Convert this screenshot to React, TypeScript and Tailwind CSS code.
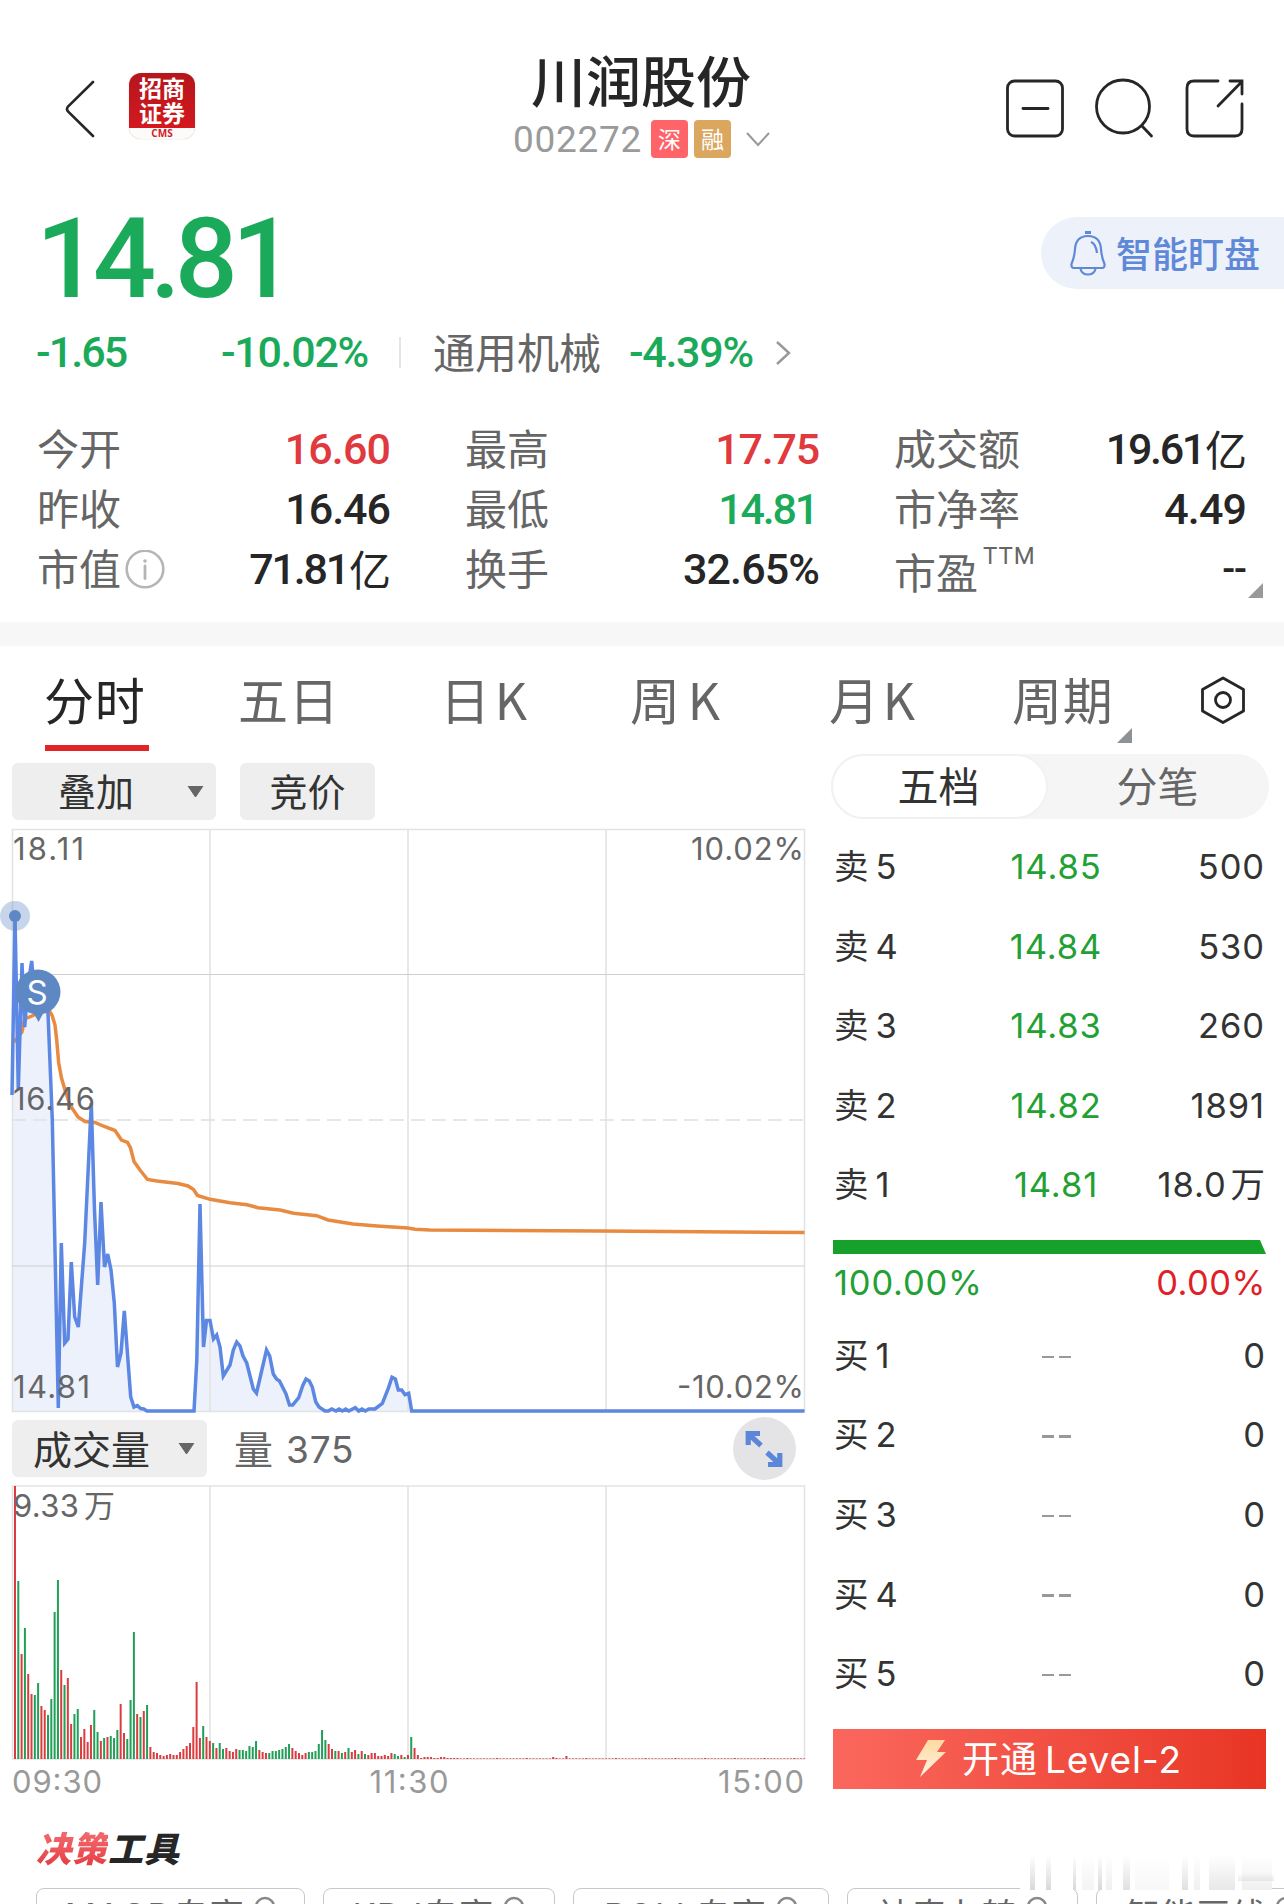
import clsx from "clsx"

const stats = [
  { label: "今开", value: "16.60", color: "text-[#e0393e]", spacing: "tracking-[-0.9px]" },
  { label: "最高", value: "17.75", color: "text-[#e0393e]", spacing: "tracking-[-1.2px]" },
  { label: "成交额", value: "19.61", unit: "亿", color: "text-[#262626]", spacing: "tracking-[-2.3px] mr-[1px]" },
  { label: "昨收", value: "16.46", color: "text-[#262626]", spacing: "tracking-[-1px]" },
  { label: "最低", value: "14.81", color: "text-[#1aaa5a]", spacing: "tracking-[-2.2px] mr-[2px]" },
  { label: "市净率", value: "4.49", color: "text-[#262626]", spacing: "tracking-[-0.9px]" },
  { label: "市值", value: "71.81", unit: "亿", color: "text-[#262626]", spacing: "tracking-[-2.2px] mr-[1px]", info: true },
  { label: "换手", value: "32.65%", color: "text-[#262626]", spacing: "tracking-[-0.9px]" },
  { label: "市盈", value: "--", color: "text-[#262626]", spacing: "tracking-[-1px] text-[38px]", sup: "TTM" },
]

const sells = [
  { label: "5", price: "14.85", amount: "500" },
  { label: "4", price: "14.84", amount: "530" },
  { label: "3", price: "14.83", amount: "260" },
  { label: "2", price: "14.82", amount: "1891" },
  { label: "1", price: "14.81", amount: "18.0", unit: "万" },
]

const buys = ["1", "2", "3", "4", "5"]

const pricePoints =
  "12,1095 15,916 18.3,1090 22,963 24.7,1027 28,985 31.7,961 35,1000 40,1005 44,1000 48,1013 52.3,1120 58.3,1408 61.3,1243 64.7,1343 68,1339 71.3,1262 74.7,1317 78.3,1327 84.7,1243 91.3,1103 94.5,1210 97.7,1285 101,1202 104.5,1267 107.7,1254 111,1270 114.3,1303 117.5,1367 121,1353 124.3,1311 130.7,1397 134,1407 137.3,1405.5 140.7,1408.5 143.7,1409 147,1411 194,1411 196.8,1360 200,1204 203.5,1347 206.5,1320.5 210,1320.5 213.5,1339 216.7,1335 220,1347 223.3,1376 230,1365 233.3,1350 236.7,1342 240,1346 243,1356 246.7,1363 253.3,1389 256.5,1393 260,1378 266.5,1350 269.7,1356 273.3,1374 276.5,1379 279.5,1381 286,1394 289.5,1405 292.7,1405 298.7,1397.7 302.7,1385.7 306,1379 309.3,1381 312.3,1387 315.7,1401.7 319,1407 325,1411 328.3,1411 331.7,1409 336,1411 339,1409 342.3,1411 345.7,1409 348.7,1411 355.3,1407.7 358.7,1411 362,1409 365.3,1411 368.7,1409 375,1409 382.3,1403.3 388.3,1388.3 392,1377.3 395.3,1379 398.3,1390 401.7,1390 405,1394.7 408.7,1393.3 411.7,1411 804.5,1411"

const avgPoints =
  "14,1042 22,1032 24.5,1019 32,1016 42,1011 50,1012 52.3,1016 55,1025 56.7,1040 58.7,1063 61.5,1078 65,1090 70,1105 78,1117 85,1121.5 95,1122.5 103,1126 115,1130.5 121.5,1140 127.5,1142.5 130.5,1148 134,1161.5 140,1170 147.5,1179.5 157,1181 178,1183.5 188,1186 193.5,1189.5 197.5,1195.5 210,1199.3 230,1202.7 247,1204.7 258,1207.7 280,1210 293.5,1213.3 316.7,1215.7 328,1220 353,1224 377,1226 408,1228 415,1229.3 430,1230 600,1231 804.5,1232.5"

// one entry per minute, negative means a falling minute
const volumes = [
  273, -178, 105, -131, 85, 65, -64, -76, 53, 49, -44, -60, -147, -179, 89, -74, 81, 35, -45, -50,
  22, 30, 17, 34, -49, -27, 18, -21, 22, -23, -21, -29, 55, 26, -20, -59, -127, 45, -42, 48,
  -54, 12, 7, 6, 4, 3, 4, 5, 4, 4, 7, 10, 13, 16, 32, 77, 21, -33, 22, 18,
  -16, 11, -16, -10, 11, 8, 7, 10, -9, -9, -8, -13, -12, -18, 9, 7, 6, -6, -8,
  -8, -9, -10, -12, -15, 11, 8, 6, 4, 6, -7, -7, -8, -15, -29, -19, 15, 10, -8, 8,
  -6, 7, -11, 7, 9, -5, 8, -5, 4, 6, 6, 3, 3, 4, 3, 6, -5, -3, 4, -2,
  4, -22, 11, 4, 1, 2, 2, 2, 1, 1, 2, 2, 1, 1, 1, 1,
]

function volumeAt(i: number) {
  if (i < volumes.length) return volumes[i]
  if (i === 163) return 2
  if (i === 167) return 3
  return i % 9 === 2 ? 1 : 0.6
}

function Header() {
  return (
    <header className="grid h-[177px] grid-cols-[1fr_270px_1fr]">
      <div className="flex items-start pl-[65px]">
        <svg className="mt-[79px] h-[60px] w-[32px]" viewBox="0 0 32 60" fill="none">
          <path d="M28 3 L3 27.5 Q1 30 3 32.500 L28 57" stroke="#262626" strokeWidth="2.6" strokeLinecap="round" />
        </svg>
        <div className="mt-[73px] ml-[32px] flex h-[66px] w-[66px] flex-col overflow-hidden rounded-[12px] bg-[#fdfafa] shadow-[0_0_1px_rgba(0,0,0,0.35)]">
          <div className="h-[55px] bg-linear-to-b from-[#b5161c] to-[#d3191e] pt-[2px] text-center text-[23px] leading-[24.500px] font-bold text-white">
            招商
            <br />
            证券
          </div>
          <div className="text-center font-['Open_Sans'] text-[10px] leading-[10px] font-bold text-[#d22028]">CMS</div>
        </div>
      </div>
      <div className="flex flex-col items-center pt-[46px]">
        <h1 className="-ml-[2px] text-[55px] leading-[64px] font-medium whitespace-nowrap text-[#262626]">川润股份</h1>
        <div className="mt-[10px] flex h-[38px] items-center">
          <span className="mr-[9px] pt-[2px] font-[Roboto] text-[37px] tracking-[0.7px] text-[#9a9a9a]">002272</span>
          <span className="mr-[6px] flex h-[38px] w-[37px] items-center justify-center rounded-[4px] bg-[#ff6468] pb-[1px] text-[23px] text-white">深</span>
          <span className="flex h-[38px] w-[37px] items-center justify-center rounded-[4px] bg-[#dba75f] pb-[1px] text-[23px] text-white">融</span>
          <svg className="ml-[14px] h-[16px] w-[26px]" viewBox="0 0 26 16" fill="none">
            <path d="M2 2 L13 14 L24 2" stroke="#999" strokeWidth="2" />
          </svg>
        </div>
      </div>
      <div className="flex justify-end gap-[29px] pt-[78px] pr-[38px]">
        <svg className="size-[61px]" viewBox="0 0 61 61" fill="none" stroke="#262626" strokeWidth="2.800">
          <rect x="2.500" y="3" width="55" height="55" rx="7" />
          <path d="M18 30.500 H43" strokeLinecap="round" />
        </svg>
        <svg className="size-[61px]" viewBox="0 0 61 61" fill="none" stroke="#262626" strokeWidth="2.800">
          <circle cx="28" cy="28.500" r="26.500" />
          <path d="M47 48 L56.500 58" strokeLinecap="round" />
        </svg>
        <svg className="size-[61px]" viewBox="0 0 61 61" fill="none" stroke="#262626" strokeWidth="2.800" strokeLinecap="round">
          <path d="M33 3 H9 Q2 3 2 10 V51 Q2 58 9 58 H50 Q57 58 57 51 V26" />
          <path d="M45 3 H57 V16 M56.500 4 L33 28" />
        </svg>
      </div>
    </header>
  )
}

function PriceSummary() {
  return (
    <section>
      <div className="flex h-[145px] justify-between">
        <div className="pl-[36px] font-[Roboto] text-[111px] leading-[164px] font-medium tracking-[-6.1px] text-[#1aaa5a]">14.81</div>
        <div className="mt-[40px] flex h-[72px] w-[243px] items-center rounded-l-full bg-[#edf1fa] pl-[28px]">
          <svg className="h-[46px] w-[38px]" viewBox="0 0 38 46" fill="none" stroke="#5f88d8" strokeWidth="2.200">
            <path d="M16 2.500 H22" strokeWidth="3" />
            <path d="M19 6 C10 6 6.500 12 6 19 C5.500 27 4 30 2.500 34 Q2 38 5 38 H33 Q36 38 35.500 34 C34 30 32.500 27 32 19 C31.500 12 28 6 19 6 Z" />
            <path d="M11.500 39 Q13 44.500 19 44.500 Q25 44.500 26.500 39" />
            <path d="M22 12 Q27 14 28 23" />
          </svg>
          <span className="ml-[9px] pb-[3px] text-[36px] font-medium text-[#5f88d8]">智能盯盘</span>
        </div>
      </div>
      <div className="flex h-[61px] items-center font-[Roboto] text-[43px] font-medium text-[#1aaa5a]">
        <span className="ml-[36px] w-[185px] tracking-[-1.900px]">-1.65</span>
        <span className="w-[178px] tracking-[-1.300px]">-10.02%</span>
        <span className="h-[31px] w-[2px] bg-[#e5e5e5]" />
        <span className="ml-[32px] w-[196px] pb-[4px] font-['Noto_Sans_CJK_SC'] text-[42px] font-normal text-[#666]">通用机械</span>
        <span className="w-[146px] tracking-[-1.300px]">-4.39%</span>
        <svg className="h-[26px] w-[16px]" viewBox="0 0 16 26" fill="none">
          <path d="M2 2 L14 13 L2 24" stroke="#999" strokeWidth="2.5" />
        </svg>
      </div>
      <div className="relative grid h-[239px] grid-cols-[428px_429px_427px] grid-rows-[60px_60px_60px] pt-[37px]">
        {stats.map((s) => (
          <div key={s.label} className="flex items-center justify-between pr-[38px] pl-[37px] text-[42px]">
            <span className={clsx("flex items-center text-[#666]", s.sup && "pt-[8px]")}>
              <span className="pb-[7px]">{s.label}</span>
              {s.info && (
                <svg className="ml-[4px] size-[40px]" viewBox="0 0 40 40" fill="none" stroke="#b5b5b5">
                  <circle cx="20" cy="19" r="18.300" strokeWidth="2.600" />
                  <path d="M20 16 V28.500" strokeWidth="2.800" strokeLinecap="round" />
                  <circle cx="20" cy="11" r="1.800" fill="#b5b5b5" stroke="none" />
                </svg>
              )}
              {s.sup && <span className="-mt-[36px] ml-[5px] font-[Roboto] text-[24px] tracking-[1px]">{s.sup}</span>}
            </span>
            <span className={clsx("flex items-center pb-[2px] font-[Roboto] text-[43px] font-medium", s.color)}>
              <span className={s.spacing}>{s.value}</span>
              {s.unit && <span className="-mr-[1px] pb-[4px] font-['Noto_Sans_CJK_SC'] text-[42px] font-normal tracking-normal">{s.unit}</span>}
            </span>
          </div>
        ))}
        <svg className="absolute right-[21px] bottom-[24px] size-[15px]" viewBox="0 0 15 15">
          <path d="M15 0 V15 H0 Z" fill="#999" />
        </svg>
      </div>
    </section>
  )
}

function PeriodTabs() {
  return (
    <nav className="flex h-[106px] items-start pt-[20px] pl-[44px] text-[50px] leading-[64px] tracking-[0.8px] text-[#666]">
      <div className="flex w-[194px] flex-col">
        <span className="text-[#262626]">分时</span>
        <span className="mt-[15px] ml-[1px] h-[6px] w-[104px] bg-[#e22426]" />
      </div>
      <span className="w-[202px]">五日</span>
      <span className="w-[190px]">日<span className="ml-[4px]">K</span></span>
      <span className="w-[199px]">周<span className="ml-[7px]">K</span></span>
      <span className="w-[183px]">月<span className="ml-[3px]">K</span></span>
      <span className="relative w-[188px]">
        周期
        <svg className="absolute top-[62px] left-[105px] size-[15px]" viewBox="0 0 15 15">
          <path d="M15 0 V15 H0 Z" fill="#8e9196" />
        </svg>
      </span>
      <svg className="mt-[9px] h-[50px] w-[46px]" viewBox="0 0 46 50" fill="none" stroke="#262626" strokeWidth="2.800">
        <path d="M23 3 L43.500 14.500 V36 L23 47.500 L2.500 36 V14.500 Z" strokeLinejoin="round" />
        <circle cx="23" cy="25" r="7.500" />
      </svg>
    </nav>
  )
}

function DownArrow() {
  return (
    <svg className="h-[12px] w-[17px]" viewBox="0 0 17 12">
      <path d="M1 0 H16 L8.500 11 Z" fill="#666" stroke="#666" strokeLinejoin="round" />
    </svg>
  )
}

function PriceChart() {
  return (
    <svg className="mt-[6px] h-[590px] w-[815px]" viewBox="0 826 815 590" fill="none">
      <path d={`M12,1411 L${pricePoints} L804.5,1411 Z`} fill="#edf1fb" />
      <path d="M12.500 829.500 H804.500 V1411.500 H12.500 Z M210 829 V1411 M408 829 V1411 M606 829 V1411" stroke="#e3e3e3" strokeWidth="1.600" />
      <path d="M12 974.500 H804 M12 1266 H804" stroke="#cfcfcf" strokeWidth="1.200" />
      <path d="M12 1120 H804" stroke="#e0e0e0" strokeWidth="1.600" strokeDasharray="14 7" />
      <polyline points={avgPoints} stroke="#e88b41" strokeWidth="3.500" />
      <polyline points={pricePoints} stroke="#5c87e2" strokeWidth="3.500" />
      <circle cx="15" cy="916" r="15" fill="#5d88c4" fillOpacity="0.35" />
      <circle cx="15" cy="916" r="6" fill="#5d88c4" />
      <path d="M33 1012 L38.500 1022 L44 1012 Z" fill="#5d88c4" />
      <circle cx="38" cy="992" r="22.500" fill="#5d88c4" />
      <g className="font-[Inter] text-[31px]" fill="#666">
        <text x="37" y="1004" fontSize="33" fill="#fff" textAnchor="middle">S</text>
        <text x="13" y="860" textLength="71">18.11</text>
        <text x="13" y="1110" textLength="82">16.46</text>
        <text x="13" y="1398" textLength="77">14.81</text>
        <text x="804" y="860" textAnchor="end" textLength="113">10.02%</text>
        <text x="804" y="1398" textAnchor="end" textLength="127">-10.02%</text>
      </g>
    </svg>
  )
}

function VolumeChart() {
  return (
    <svg className="mt-[6px] h-[324px] w-[815px]" viewBox="0 1483 815 324" fill="none">
      <path d="M12.500 1486 H804.500 V1759 H12.500 Z M210 1486 V1759 M408 1486 V1759 M606 1486 V1759" stroke="#e3e3e3" strokeWidth="1.600" />
      {Array.from({ length: 240 }, (_, i) => {
        const v = volumeAt(i)
        const h = Math.abs(v)
        return <rect key={i} x={14 + i * 3.302} y={1759 - h} width="2" height={h} fill={v < 0 ? "#1f9f57" : "#da3c3f"} />
      })}
      <g className="font-[Inter] text-[31px]" fill="#999">
        <text x="13" y="1517" fill="#666" textLength="66">9.33</text>
        <text x="84" y="1517" fill="#666" className="font-['Noto_Sans_CJK_SC']">万</text>
        <text x="12" y="1793" textLength="90">09:30</text>
        <text x="409" y="1793" textAnchor="middle" textLength="79">11:30</text>
        <text x="804" y="1793" textAnchor="end" textLength="86">15:00</text>
      </g>
    </svg>
  )
}

function OrderBook() {
  return (
    <aside className="flex w-[453px] flex-col">
      <div className="mt-[2px] flex h-[65px] w-[438px] items-center rounded-full bg-[#f5f5f5] text-[41px] leading-[58px]">
        <span className="flex h-[65px] w-[217px] items-center justify-center rounded-full border-2 border-[#f1f1f1] bg-white pr-[2px] pb-[5px] text-[#333]">五档</span>
        <span className="flex-1 pr-[2px] pb-[5px] text-center text-[#666]">分笔</span>
      </div>
      <div className="mt-[8px] ml-[2px] w-[433px] font-[Inter,'Noto_Sans_CJK_SC'] text-[34.500px] tracking-[0.9px] text-[#333]">
        {sells.map((s) => (
          <div key={s.label} className="grid h-[79.6px] grid-cols-[112px_222px_minmax(0,1fr)] items-center">
            <span className="flex gap-[6px] pl-[1px]"><span>卖</span><span>{s.label}</span></span>
            <span className="text-center text-[#22a033]">{s.price}</span>
            <span className="flex justify-end gap-[4px] pr-[1px] whitespace-nowrap">
              <span>{s.amount}</span>
              {s.unit && <span className="-mr-[1px]">{s.unit}</span>}
            </span>
          </div>
        ))}
      </div>
      <svg className="mt-[15px] ml-[2px] h-[14px] w-[433px] shrink-0" viewBox="0 0 433 14">
        <path d="M0 0 H427 L433 14 H0 Z" fill="#17a02a" />
      </svg>
      <div className="ml-[2px] flex h-[54px] w-[433px] items-center justify-between pt-[3px] pl-[1px] font-[Inter] text-[34.500px] tracking-[0.8px]">
        <span className="text-[#22a033]">100.00%</span>
        <span className="tracking-[0.5px] text-[#e02027]">0.00%</span>
      </div>
      <div className="mt-[8px] ml-[2px] w-[433px] font-[Inter,'Noto_Sans_CJK_SC'] text-[34.500px] tracking-[0.9px] text-[#333]">
        {buys.map((b) => (
          <div key={b} className="grid h-[79.6px] grid-cols-[112px_222px_1fr] items-center">
            <span className="flex gap-[6px] pl-[1px]"><span>买</span><span>{b}</span></span>
            <span className="flex justify-center gap-[5px] pt-[2px]">
              <span className="h-[2.500px] w-[12px] bg-[#999]" />
              <span className="h-[2.500px] w-[12px] bg-[#999]" />
            </span>
            <span className="text-right">0</span>
          </div>
        ))}
      </div>
      <button className="mt-[15px] ml-[2px] flex h-[60px] w-[433px] items-center bg-linear-to-r from-[#fb675d] to-[#e83423] pl-[82px] font-[Inter,'Noto_Sans_CJK_SC'] text-[37px] text-white">
        <svg className="h-[37px] w-[32px]" viewBox="0 0 32 37">
          <defs>
            <linearGradient id="bolt" x1="0" y1="0" x2="0" y2="1">
              <stop offset="0" stopColor="#ffd9a0" />
              <stop offset="1" stopColor="#fff4e6" />
            </linearGradient>
          </defs>
          <path d="M13 0 H30 L22 12 H31 L5 37 L12 20 H1 Z" fill="url(#bolt)" />
        </svg>
        <span className="ml-[15px] pt-[1px] tracking-[1px]">开通</span>
        <span className="ml-[7px] pt-[1px] tracking-[0.9px]">Level-2</span>
      </button>
    </aside>
  )
}

function Tools() {
  const tools = [
    { name: "MACD专享", width: "w-[269px]", spacing: "tracking-[1.300px]" },
    { name: "KDJ专享", width: "w-[232px]", spacing: "tracking-[1px]" },
    { name: "BOLL专享", width: "w-[256px]", spacing: "tracking-[1px]" },
    { name: "神奇九转", width: "w-[231px]", spacing: "tracking-[0.5px]" },
    { name: "智能画线", width: "w-[231px]", spacing: "tracking-[0.5px]" },
  ]
  return (
    <section className="relative h-[95px] overflow-hidden">
      <h2 className="pt-[13px] pl-[36px] text-[35px] leading-[50px] font-black tracking-[1px] text-[#262626] italic">
        <span className="bg-linear-to-b from-[#f4777b] to-[#e4313c] bg-clip-text text-transparent">决策</span>工具
      </h2>
      <div className="mt-[16px] ml-[36px] flex w-[1400px] gap-[18px]">
        {tools.map((t) => (
          <div
            key={t.name}
            className={clsx(
              "flex h-[60px] shrink-0 items-start justify-center gap-[9px] rounded-[8px] border-[1.500px] border-[#c8c8c8] font-[Inter,'Noto_Sans_CJK_SC'] text-[34.500px] leading-[53px] text-[#666]",
              t.width,
              t.spacing
            )}
          >
            {t.name}
            <svg className="mt-[7px] size-[22px]" viewBox="0 0 22 22" fill="none" stroke="#888" strokeWidth="2.500">
              <circle cx="11" cy="11" r="9" />
            </svg>
          </div>
        ))}
      </div>
      {/* faded watermark */}
      <svg className="absolute top-[38px] left-[1020px] h-[44px] w-[258px]" viewBox="0 0 258 44">
        <defs>
          <linearGradient id="fade" x1="0" y1="0" x2="0" y2="1">
            <stop offset="0" stopColor="#ccc" stopOpacity="0" />
            <stop offset="1" stopColor="#ccc" stopOpacity="0.75" />
          </linearGradient>
        </defs>
        <rect x="0" y="20" width="252" height="23" fill="#fff" />
        <g fill="url(#fade)">
          <rect x="10" y="8" width="5" height="35" />
          <rect x="26" y="8" width="5" height="35" />
          <rect x="53" y="8" width="3" height="35" />
          <rect x="62" y="8" width="12" height="35" opacity="0.3" />
          <rect x="78" y="8" width="4" height="35" />
          <rect x="86" y="8" width="6" height="35" opacity="0.4" />
          <rect x="103" y="8" width="7" height="35" opacity="0.8" />
          <rect x="115" y="8" width="34" height="35" opacity="0.2" />
          <rect x="162" y="8" width="6" height="35" opacity="0.8" />
          <rect x="174" y="8" width="6" height="35" opacity="0.4" />
          <rect x="189" y="8" width="26" height="35" opacity="0.6" />
          <rect x="222" y="8" width="30" height="35" opacity="0.4" />
          <rect x="218" y="26" width="36" height="8" opacity="0.5" />
        </g>
      </svg>
    </section>
  )
}

export default function App() {
  return (
    <main className="h-[1904px] w-[1284px] overflow-hidden bg-white font-['Noto_Sans_CJK_SC',sans-serif]">
      <Header />
      <PriceSummary />
      <div className="h-[24px] bg-[#f7f7f7]" />
      <PeriodTabs />
      <div className="flex h-[1057px]">
        <section className="w-[831px] pt-[11px]">
          <div className="flex gap-[24px] pl-[12px] text-[38px] leading-[54px] text-[#333]">
            <div className="flex h-[57px] w-[204px] items-center justify-between rounded-[6px] bg-[#eee] pr-[12px] pl-[46px]">
              <span className="pb-[3px]">叠加</span>
              <DownArrow />
            </div>
            <div className="h-[57px] w-[135px] rounded-[6px] bg-[#eee] text-center">竞价</div>
          </div>
          <PriceChart />
          <div className="mt-[4px] flex h-[57px] items-center pl-[12px] text-[39px] leading-[56px]">
            <div className="flex h-[57px] w-[195px] items-center justify-between rounded-[6px] bg-[#eee] pr-[12px] pl-[21px] text-[#333]">
              <span className="pb-[3px]">成交量</span>
              <DownArrow />
            </div>
            <span className="ml-[27px] pb-[3px] text-[#666]">量</span>
            <span className="ml-[13px] pt-[2px] font-[Inter] text-[37px] tracking-[0.8px] text-[#666]">375</span>
            <svg className="mr-[35px] ml-auto size-[63px]" viewBox="0 0 63 63">
              <circle cx="31.500" cy="31.500" r="31.500" fill="#e4e4e6" />
              <path d="M15.200 28 V16.500 H27 M16 17.500 L28 28.500" stroke="#5c87d9" strokeWidth="5.200" fill="none" />
              <path d="M46.800 36 V47.500 H35 M46 46.500 L34 35.500" stroke="#5c87d9" strokeWidth="5.200" fill="none" />
            </svg>
          </div>
          <VolumeChart />
        </section>
        <OrderBook />
      </div>
      <Tools />
    </main>
  )
}
